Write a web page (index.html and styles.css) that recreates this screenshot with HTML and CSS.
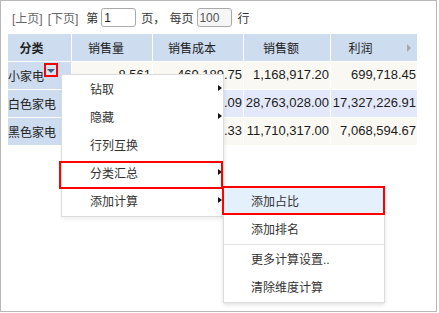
FILE: index.html
```html
<!DOCTYPE html>
<html>
<head>
<meta charset="utf-8">
<link rel="stylesheet" href="styles.css">
</head>
<body>
<div class="frame">
  <div class="toolbar">
    <span class="link">[上页]</span>
    <span class="link l2">[下页]</span>
    <span class="t-di">第</span>
    <input class="inp i1" value="1">
    <span class="t-ye">页，</span>
    <span class="t-mei">每页</span>
    <input class="inp i2" value="100">
    <span class="t-hang">行</span>
  </div>
  <div class="grid">
    <div class="h first">分类</div>
    <div class="h">销售量</div>
    <div class="h">销售成本</div>
    <div class="h">销售额</div>
    <div class="h profit">利润<i class="sort"></i></div>

    <div class="cat"><span>小家电</span><span class="dd"><i></i></span></div>
    <div class="c r1">8,561</div>
    <div class="c r1">469,189.75</div>
    <div class="c r1">1,168,917.20</div>
    <div class="c r1">699,718.45</div>

    <div class="cat"><span>白色家电</span></div>
    <div class="c r2">185,246</div>
    <div class="c r2">11,435,801.09</div>
    <div class="c r2">28,763,028.00</div>
    <div class="c r2">17,327,226.91</div>

    <div class="cat"><span>黑色家电</span></div>
    <div class="c r1">72,318</div>
    <div class="c r1">4,641,722.33</div>
    <div class="c r1">11,710,317.00</div>
    <div class="c r1">7,068,594.67</div>
  </div>
</div>

<div class="menu">
  <div class="mi"><span>钻取</span><i class="arr"></i></div>
  <div class="mi"><span>隐藏</span><i class="arr"></i></div>
  <div class="mi"><span>行列互换</span></div>
  <div class="mi sel"><span>分类汇总</span><i class="arr"></i></div>
  <div class="mi"><span>添加计算</span><i class="arr"></i></div>
</div>

<div class="sub">
  <div class="si hl">添加占比</div>
  <div class="si">添加排名</div>
  <div class="sep"></div>
  <div class="si">更多计算设置..</div>
  <div class="si">清除维度计算</div>
</div>
</body>
</html>
```

FILE: styles.css
```css
body {
  margin: 0;
  font-family: "Liberation Sans", "Noto Sans CJK SC", sans-serif;
  font-size: 12px;
  color: #333;
  background: #fff;
}

.frame {
  box-sizing: border-box;
  width: 437px;
  height: 312px;
  border: 1px solid #b8b8b8;
  padding-left: 7px;
}

.toolbar {
  height: 33px;
  display: flex;
  align-items: center;
  padding-left: 4px;
  white-space: nowrap;
}

.link { color: #666; }
.l2 { margin-left: 5px; }
.t-di { margin-left: 8px; }
.t-ye { margin-left: 5px; }
.t-mei { margin-left: 4px; }
.t-hang { margin-left: 5px; }

.inp {
  box-sizing: border-box;
  width: 35px;
  height: 19px;
  margin: 0 0 0 3px;
  border: 1px solid #a9a9a9;
  border-radius: 3px;
  padding: 0 0 0 2px;
  font: 12px "Liberation Sans", sans-serif;
  color: #222;
  background: #fff;
  outline: none;
}
.i2 {
  margin-left: 4px;
  padding-left: 1px;
  background: #f6f6f6;
  color: #555;
}

.grid {
  display: grid;
  grid-template-columns: 63px 80px 90px 86px 86px;
  grid-auto-rows: 27px;
  gap: 1px;
  width: 409px;
  background: #fff;
}

.h {
  box-sizing: border-box;
  background: #cddcef;
  color: #222;
  text-align: center;
  padding: 7px 12px 0 0;
  line-height: 17px;
}
.h.first {
  font-weight: bold;
  padding-right: 16px;
}
.h.profit {
  position: relative;
  padding-right: 27px;
}
.sort {
  position: absolute;
  right: 6px;
  top: 10px;
  width: 0;
  height: 0;
  border-left: 4px solid #a8a8a8;
  border-top: 4px solid transparent;
  border-bottom: 4px solid transparent;
}

.cat {
  background: #cddcef;
  display: flex;
  align-items: flex-start;
  color: #222;
}
.cat span:first-child {
  margin-top: 7px;
  line-height: 17px;
}
.dd {
  box-sizing: border-box;
  width: 14px;
  height: 14px;
  margin-top: 1px;
  border: 2px solid #f00;
  background: #dae4f1;
  display: flex;
  justify-content: center;
}
.dd i {
  margin-top: 4px;
  width: 0;
  height: 0;
  border-top: 4px solid #3d5e85;
  border-left: 4px solid transparent;
  border-right: 4px solid transparent;
}

.c {
  box-sizing: border-box;
  text-align: right;
  padding-right: 1px;
  font-size: 13px;
  line-height: 26px;
  color: #1c1c1c;
  white-space: nowrap;
  overflow: hidden;
}
.r1 { background: #faf8f3; }
.r2 { background: #e3e9fa; }

.menu {
  position: absolute;
  left: 61px;
  top: 74px;
  width: 163px;
  box-sizing: border-box;
  border: 1px solid #dcdcdc;
  padding-top: 1px;
  background: #fff;
  box-shadow: 1px 2px 4px rgba(0, 0, 0, 0.08);
}
.mi {
  position: relative;
  height: 28px;
  line-height: 28px;
  padding-left: 28px;
  display: flex;
  align-items: center;
  justify-content: space-between;
  color: #333;
}
.arr {
  width: 0;
  height: 0;
  margin-right: 1px;
  margin-bottom: 5px;
  border-left: 4px solid #111;
  border-top: 3.5px solid transparent;
  border-bottom: 3.5px solid transparent;
}
.mi.sel::after {
  content: "";
  position: absolute;
  left: -3px;
  right: 0;
  top: 1px;
  bottom: -1px;
  border: 2px solid #f00;
}

.sub {
  position: absolute;
  left: 223px;
  top: 186px;
  width: 162px;
  box-sizing: border-box;
  border: 1px solid #dcdcdc;
  padding-bottom: 1px;
  background: #fff;
  box-shadow: 0 2px 4px rgba(0, 0, 0, 0.12);
}
.si {
  position: relative;
  height: 28px;
  line-height: 30px;
  padding-left: 27px;
  color: #333;
  white-space: nowrap;
}
.si.hl { background: #e5f0fd; }
.si.hl::after {
  content: "";
  position: absolute;
  left: -2px;
  right: -1px;
  top: -1px;
  bottom: 0;
  border: 2px solid #f00;
}
.sep {
  height: 1px;
  margin-top: 1px;
  background: #e3e3e3;
}
```
